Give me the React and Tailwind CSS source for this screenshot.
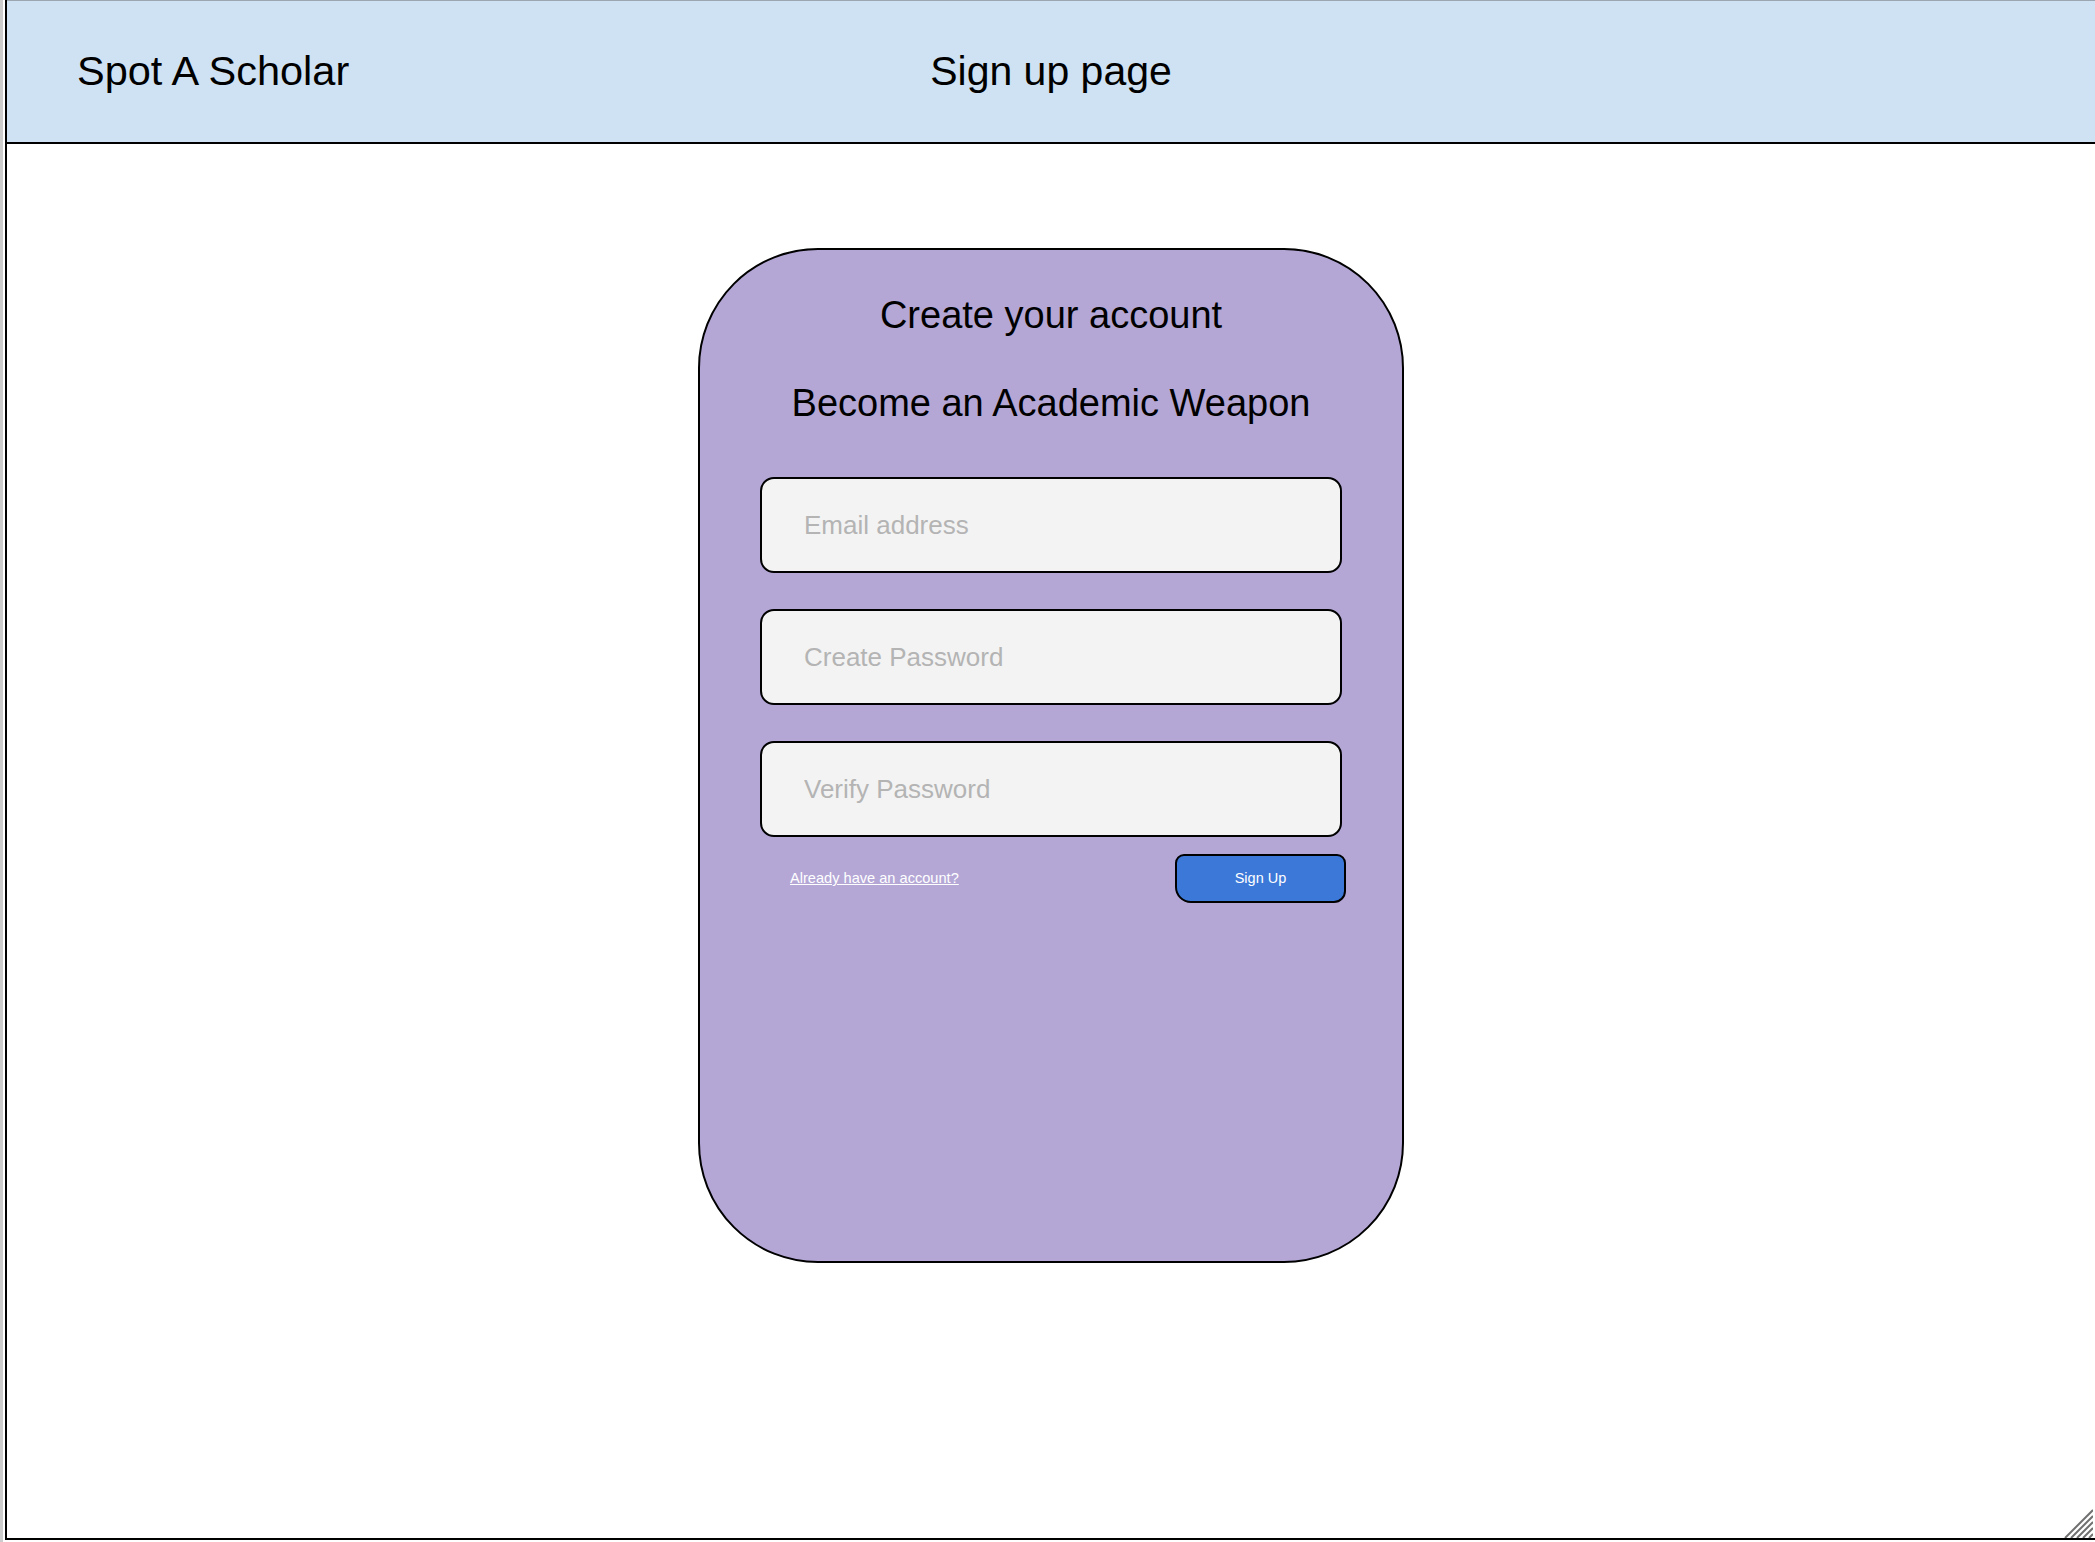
import React from 'react';

const Field = ({ placeholder, type = 'text' }) => (
  <input
    type={type}
    placeholder={placeholder}
    className="w-full h-[96px] rounded-[14px] border-2 border-black bg-[#f3f3f3] pl-[42px] text-[26px] text-black placeholder:text-[#b4b4b4] outline-none"
  />
);

const SignUpPage = () => {
  return (
    <div
      className="w-full h-[1542px] bg-white border-l-[3px] border-[#cccccc] overflow-hidden"
      style={{ fontFamily: '"Liberation Sans", Arial, sans-serif' }}
    >
      <div className="relative ml-[2px] h-[1540px] border-l-2 border-b-2 border-black flex flex-col">
        {/* Header */}
        <div className="h-[144px] shrink-0 grid grid-cols-3 items-center bg-[#cfe2f3] border-t border-[#9aa6b2] border-b-2 border-b-black">
          <div className="pl-[70px] text-[41.5px] text-black">Spot A Scholar</div>
          <div className="text-center text-[41px] text-black">Sign up page</div>
          <div />
        </div>

        {/* Card */}
        <div className="flex justify-center pt-[104px]">
          <div className="w-[706px] h-[1015px] rounded-[120px] border-2 border-black bg-[#b4a7d6] px-[60px] pt-[44px] flex flex-col">
            <h1 className="text-center text-[38px] leading-[1.15] text-black">Create your account</h1>
            <h2 className="mt-[44px] text-center text-[38px] leading-[1.15] text-black">
              Become an Academic Weapon
            </h2>

            <div className="mt-[52px] flex flex-col gap-[36px]">
              <Field placeholder="Email address" type="email" />
              <Field placeholder="Create Password" type="password" />
              <Field placeholder="Verify Password" type="password" />
            </div>

            <div className="mt-[17px] flex items-center justify-between pl-[30px] -mr-[4px]">
              <a href="#" className="text-[14.6px] text-white underline">
                Already have an account?
              </a>
              <button className="w-[171px] h-[49px] border-2 border-black bg-[#3c78d8] text-white text-[14.5px] rounded-tl-[9px] rounded-tr-[9px] rounded-bl-[16px] rounded-br-[12px]">
                Sign Up
              </button>
            </div>
          </div>
        </div>

        {/* resize grip */}
        <svg className="absolute right-[2px] bottom-0" width="30" height="30" viewBox="0 0 30 30">
          {[2, 8, 14, 20, 26].map((o) => (
            <line key={o} x1={o} y1="30" x2="30" y2={o} stroke="#707070" strokeWidth="2" />
          ))}
        </svg>
      </div>
    </div>
  );
};

export default SignUpPage;
